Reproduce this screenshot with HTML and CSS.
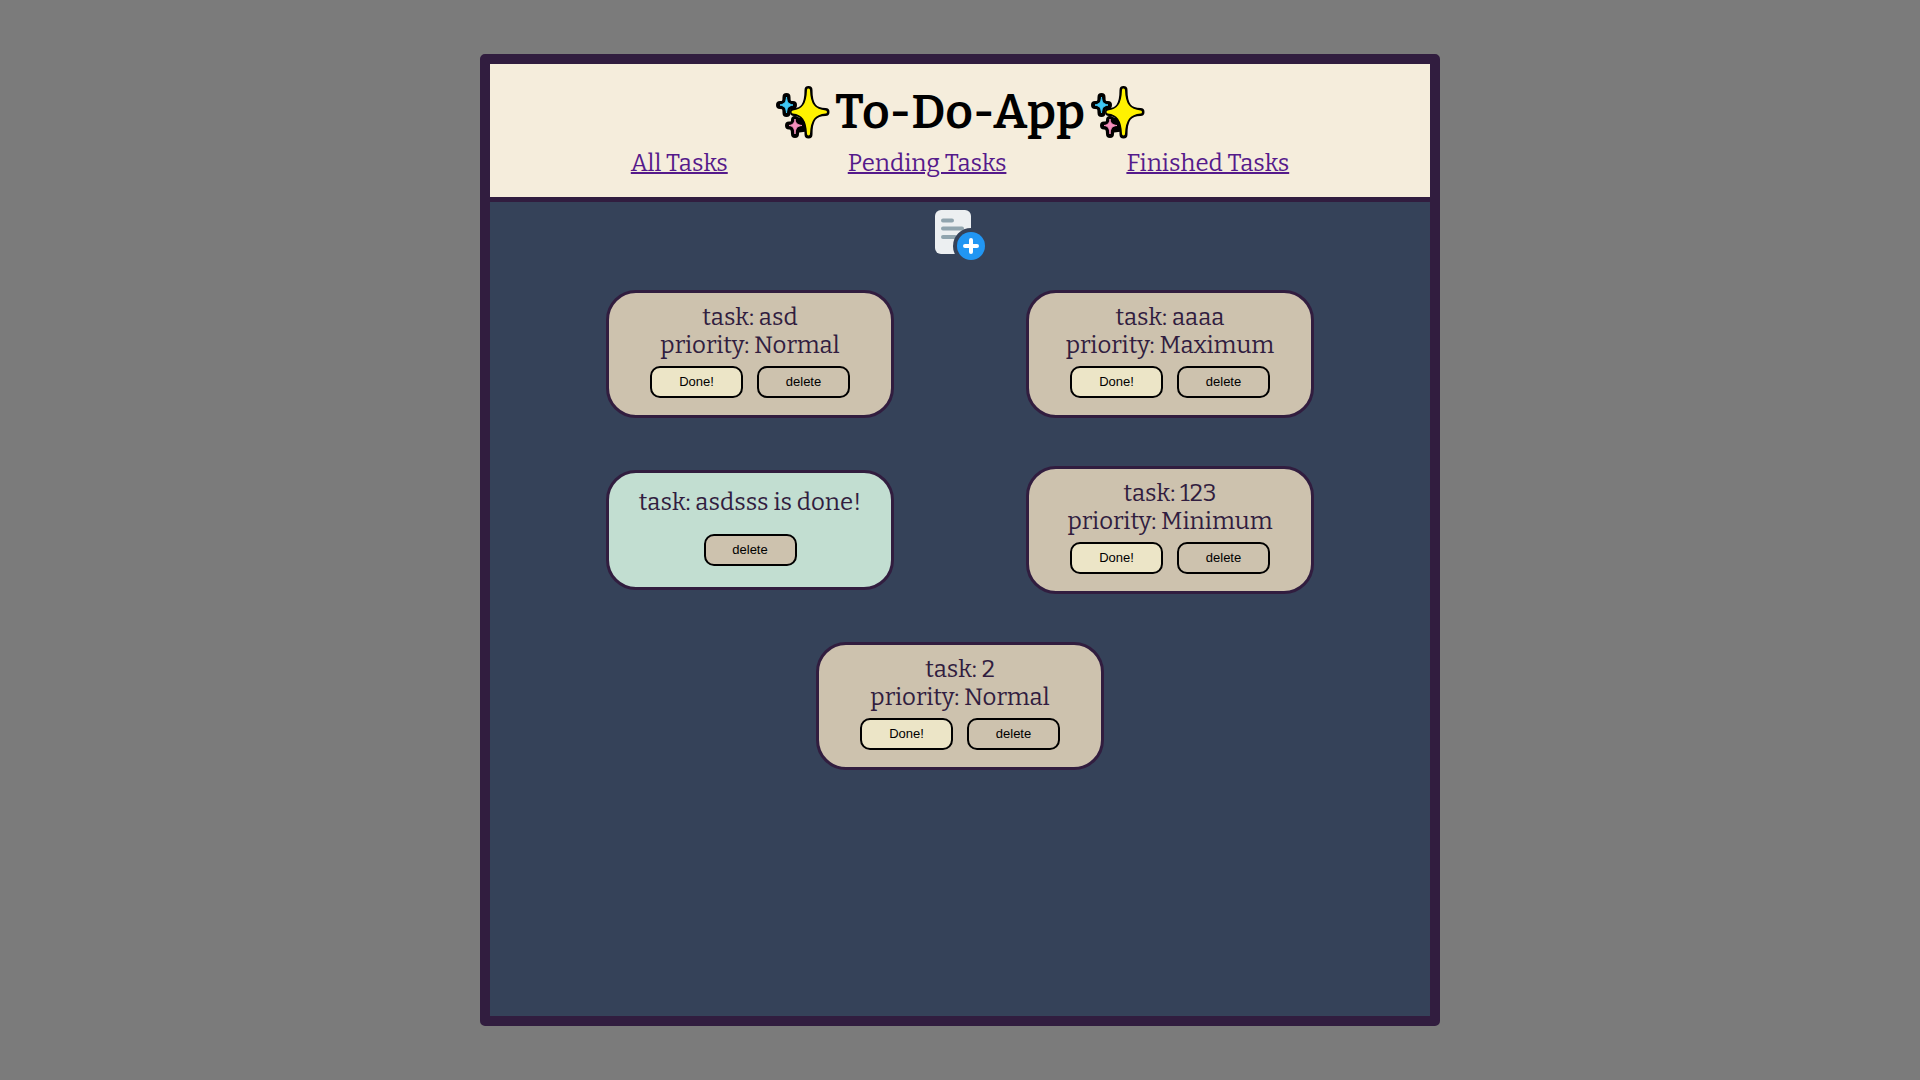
FILE: index.html
```html
<!DOCTYPE html>
<html lang="en">
<head>
<meta charset="utf-8">
<meta name="viewport" content="width=device-width, initial-scale=1">
<title>To-Do-App</title>
<link rel="stylesheet" href="styles.css">
</head>
<body>
<svg width="0" height="0" class="defs" aria-hidden="true">
  <symbol id="sparkles" viewBox="5 5 55 54">
    <g stroke="#000" stroke-width="8" stroke-linejoin="round">
      <path fill="#000" stroke-width="3" d="M24 38L34 40L37 50L29 51L25 45Z"/>
      <path fill="#000" d="M38.500 10C38.500 25 43 32 55.500 32C43 32 38.500 39 38.500 54.500C38.500 39 34 32 24 32C34 32 38.500 25 38.500 10Z"/>
      <path fill="#000" d="M16.500 17C16.500 23 18 25 23 25C18 25 16.500 27 16.500 33C16.500 27 15 25 10 25C15 25 16.500 23 16.500 17Z"/>
      <path fill="#000" d="M25 40C25 44 27 45.500 31 45.500C27 45.500 25 48 25 54C25 48 23 45.500 19 45.500C23 45.500 25 44 25 40Z"/>
    </g>
    <path fill="#3fc8f5" stroke="#3fc8f5" stroke-linejoin="round" d="M16.500 17C17 22 18 24 23 25C18 26 17 28 16.500 33C16 28 15 26 10 25C15 24 16 22 16.500 17Z"/>
    <path fill="#f58fbd" stroke="#f58fbd" stroke-linejoin="round" d="M25 39C25.500 43 27 45 32 45.500C27 46 25.500 48 25 54C24.500 48 23 46 19 45.500C23 45 24.500 43 25 39Z"/>
    <path fill="#fff200" stroke="#fff200" stroke-width="3" stroke-linejoin="round" d="M38.500 10C39 25 44 31 55.500 32C44 33 39 39 38.500 54C38 39 33 33 23 32C33 31 38 25 38.500 10Z"/>
  </symbol>
</svg>
<div class="app">
  <header class="header">
    <h1 class="title"><svg class="sparkles" aria-hidden="true"><use href="#sparkles"/></svg>To-Do-App<svg class="sparkles" aria-hidden="true"><use href="#sparkles"/></svg></h1>
    <nav class="nav">
      <a href="#all">All Tasks</a>
      <a href="#pending">Pending Tasks</a>
      <a href="#finished">Finished Tasks</a>
    </nav>
  </header>
  <main class="content">
    <button class="add" type="button" aria-label="Add task">
      <svg viewBox="0 0 50 50" width="50" height="50" aria-hidden="true">
        <rect width="36" height="44" rx="6" fill="#eceff1"/>
        <path d="M8 10.500H17M8 18.500H27M8 27H20" stroke="#90a4ae" stroke-width="4" stroke-linecap="round"/>
        <circle cx="36" cy="36" r="18" fill="#354259"/>
        <circle cx="36" cy="36" r="14" fill="#2196f3"/>
        <path d="M36 30V42M30 36H42" stroke="#fff" stroke-width="4" stroke-linecap="round"/>
      </svg>
    </button>
    <section class="tasks">
      <article class="card">
        <p>task: asd</p><p>priority: Normal</p>
        <div class="actions"><button class="done" type="button">Done!</button><button type="button">delete</button></div>
      </article>
      <article class="card">
        <p>task: aaaa</p><p>priority: Maximum</p>
        <div class="actions"><button class="done" type="button">Done!</button><button type="button">delete</button></div>
      </article>
      <article class="card finished">
        <p>task: asdsss is done!</p>
        <div class="actions"><button type="button">delete</button></div>
      </article>
      <article class="card">
        <p>task: 123</p><p>priority: Minimum</p>
        <div class="actions"><button class="done" type="button">Done!</button><button type="button">delete</button></div>
      </article>
      <article class="card">
        <p>task: 2</p><p>priority: Normal</p>
        <div class="actions"><button class="done" type="button">Done!</button><button type="button">delete</button></div>
      </article>
    </section>
  </main>
</div>
</body>
</html>
```
FILE: styles.css
```css
* {
  box-sizing: border-box;
}

body {
  margin: 0;
  min-height: 100vh;
  display: flex;
  align-items: center;
  justify-content: center;
  background: #7b7b7b;
  font-family: Bitter, "DejaVu Serif", serif;
  color: #311d3f;
}

.defs {
  position: absolute;
}

.app {
  display: flex;
  flex-direction: column;
  width: 50%;
  min-height: 90vh;
  border: 10px solid #311d3f;
  border-radius: 5px;
  background: #354259;
}

.header {
  padding: 20px 0 19px;
  background: #f5eddc;
  border-bottom: 5px solid #311d3f;
}

.title {
  display: flex;
  align-items: center;
  justify-content: center;
  gap: 5px;
  margin: 0;
  font-size: 48px;
  font-weight: 600;
  line-height: 56px;
  color: #000;
}

.sparkles {
  width: 55px;
  height: 54px;
}

.nav {
  display: flex;
  justify-content: center;
  gap: 120px;
  padding-top: 8px;
  font-size: 24px;
  line-height: 30px;
}

.nav a {
  color: #551a8b;
  text-decoration-thickness: 2px;
}

.content {
  display: flex;
  flex-direction: column;
  align-items: center;
  padding: 8px 0;
}

.add {
  display: block;
  padding: 0;
  border: 0;
  background: none;
}

.add svg {
  display: block;
}

.tasks {
  display: flex;
  flex-wrap: wrap;
  align-items: center;
  justify-content: center;
  gap: 48px 132px;
  width: 100%;
  padding-top: 30px;
}

.card {
  width: 288px;
  padding: 10px 0 17px;
  border: 3px solid #311d3f;
  border-radius: 30px;
  background: #cdc2ae;
  font-size: 24px;
  line-height: 28px;
  text-align: center;
}

.card p {
  margin: 0;
}

.actions {
  display: flex;
  justify-content: center;
  gap: 14px;
  padding-top: 7px;
}

.actions button {
  width: 93px;
  height: 32px;
  padding: 0 0 1px;
  border: 2px solid #000;
  border-radius: 10px;
  background: #cdc2ae;
  font: 13px "Liberation Sans", Arial, sans-serif;
  color: #000;
}

.actions .done {
  background: #ece5c7;
}

.finished {
  padding: 15px 0 21px;
  background: #c2ded1;
}

.finished .actions {
  padding-top: 18px;
}
```
